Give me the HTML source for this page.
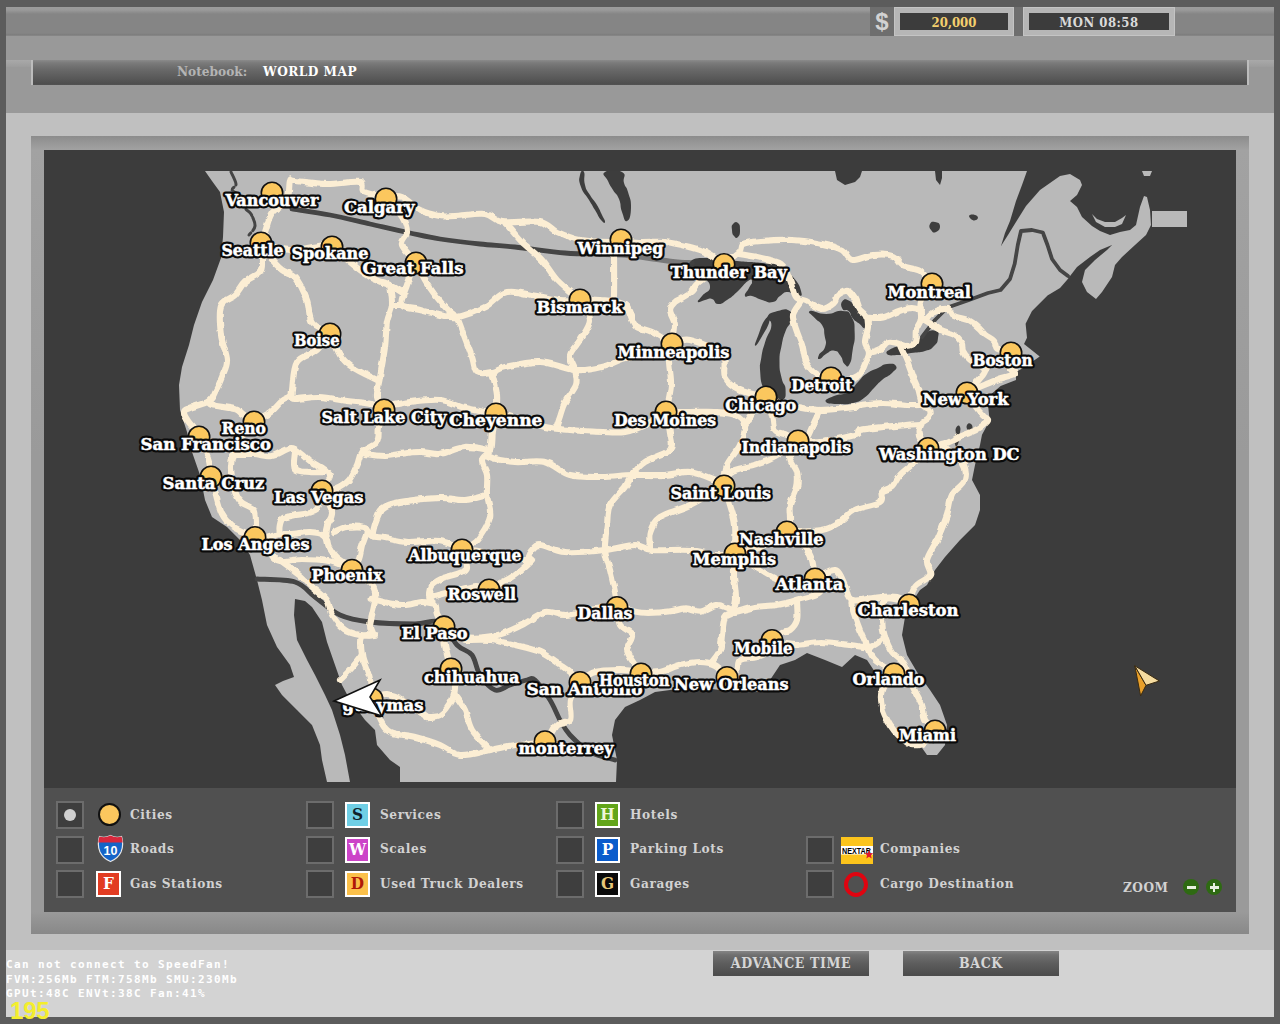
<!DOCTYPE html>
<html lang="en"><head><meta charset="utf-8"><title>World Map</title>
<style>
html,body{margin:0;padding:0}
body{width:1280px;height:1024px;background:#5c5c5c;position:relative;overflow:hidden;font-family:"DejaVu Serif Condensed","DejaVu Serif","Liberation Serif",serif;font-weight:bold}
div{position:absolute;box-sizing:border-box}
#topbar{left:6px;top:7px;width:1268px;height:29px;background:linear-gradient(#9c9c9c 0,#9a9a9a 3px,#858585 7px,#858585 26px,#7c7c7c 28px,#8e8e8e 29px)}
#band{left:6px;top:36px;width:1268px;height:77px;background:#999}
#panel{left:6px;top:113px;width:1268px;height:837px;background:#c0c0c0}
#foot{left:6px;top:950px;width:1268px;height:67px;background:#d3d3d3}
#title{left:31px;top:60px;width:1218px;height:25px;background:linear-gradient(#8a8a8a 0,#7a7a7a 3px,#6a6a6a 9px,#4e4e4e 24px,#555 25px);border-left:2px solid #bdbdbd;border-right:2px solid #bdbdbd}
#title span{position:absolute;top:3px;font-size:13.5px;white-space:nowrap}
#frame{left:31px;top:136px;width:1218px;height:798px;background:linear-gradient(#8c8c8c 0,#a2a2a2 14px,#9a9a9a 40%,#9a9a9a 776px,#888 798px)}
#mapbg{left:44px;top:150px;width:1192px;height:638px;background:#3c3c3c}
#legend{left:44px;top:788px;width:1192px;height:124px;background:#505050}
.cb{width:28px;height:28px;background:#3e3e3e;border:2px solid #6c6c6c}
.lb{font-size:13.5px;color:#d2d2d2;letter-spacing:.6px;white-space:nowrap;line-height:16px}
.ic{width:25px;height:26px;border:2.5px solid #fff;text-align:center;font-size:17px;line-height:21px}
.btn{height:25px;width:156px;top:951px;background:linear-gradient(#858585 0,#707070 4px,#5e5e5e 12px,#4c4c4c 24px);color:#d6d6d6;font-size:14px;letter-spacing:.6px;text-align:center;line-height:24px}
.box{top:7px;height:29px;background:#b6b6b6;border:1px solid #c4c4c4}
.box i{position:absolute;left:5px;right:5px;top:5px;bottom:5px;background:#3c3c3c;font-style:normal;text-align:center;font-size:13px;line-height:20px;font-weight:bold}
#osd{left:6px;top:958.3px;font:bold 11px/14.4px "DejaVu Sans Mono","Liberation Mono",monospace;color:#fff;white-space:pre;letter-spacing:1.38px}
#fps{left:10px;top:998px;font:bold 24px/26px "Liberation Sans",sans-serif;color:#f4ee2c;letter-spacing:-.2px}
</style></head><body>
<div id="topbar"></div><div id="band"></div><div id="panel"></div><div id="foot"></div>
<div style="left:870px;top:7px;width:24px;height:29px;background:#6e6e6e;color:#d2d2d2;font:bold 24px/29px 'Liberation Sans',sans-serif;text-align:center">$</div>
<div class="box" style="left:894px;width:120px"><i style="color:#f3cf6e">20,000</i></div>
<div style="left:1014px;top:7px;width:9px;height:29px;background:#6e6e6e"></div>
<div class="box" style="left:1023px;width:152px"><i style="color:#dadada;letter-spacing:.5px">MON 08:58</i></div>
<div style="left:6px;top:60px;width:25px;height:7px;background:linear-gradient(#a9a9a9,#9c9c9c)"></div><div style="left:1249px;top:60px;width:25px;height:7px;background:linear-gradient(#a9a9a9,#9c9c9c)"></div>
<div id="title"><span style="left:144px;color:#b4b4b4">Notebook:</span><span style="left:230px;color:#fff;letter-spacing:.5px">WORLD MAP</span></div>
<div id="frame"></div>
<div id="mapbg"></div>
<svg width="1192" height="638" viewBox="44 150 1192 638" style="position:absolute;left:44px;top:150px;overflow:hidden">
<defs><filter id="soft" x="-5%" y="-5%" width="110%" height="110%"><feGaussianBlur stdDeviation="0.7"/></filter><filter id="wob" x="-2%" y="-2%" width="104%" height="104%"><feTurbulence type="fractalNoise" baseFrequency="0.11" numOctaves="2" seed="4" result="n"/><feDisplacementMap in="SourceGraphic" in2="n" scale="4" xChannelSelector="R" yChannelSelector="G"/><feGaussianBlur stdDeviation="0.45"/></filter><clipPath id="mc"><rect x="100" y="171" width="1088" height="611"/></clipPath></defs>
<g clip-path="url(#mc)">
<g filter="url(#soft)"><polygon fill="#b9b9b9" points="205,171 212,181 220,192 224,212 223,237 221,258 213,280 202,302 194,325 189,345 182,367 179,385 180,410 187,432 192,452 200,475 205,500 212,517 227,527 240,540 250,555 257,580 262,600 267,625 277,647 290,665 294,677 283,681 275,685 282,695 297,710 312,725 320,745 322,760 327,782 350,782 345,755 340,735 332,710 325,695 315,675 307,660 297,640 294,615 295,599 305,601 312,607 322,622 327,642 335,665 342,685 350,700 365,720 375,730 377,745 390,760 400,767 400,782 616,782 617,760 612,735 615,720 625,707 640,700 655,692 670,690 695,687 720,690 740,690 760,692 770,680 780,665 795,660 807,653 825,660 842,667 855,655 867,660 875,672 882,690 880,707 890,725 900,740 920,745 927,755 937,755 945,745 947,725 940,705 930,690 917,672 907,655 902,635 905,617 912,602 920,590 927,585 935,570 945,557 960,540 975,525 980,510 980,495 972,480 975,465 980,445 982,434.7 989.7,420.6 988,405 989.7,395.6 1000.6,386 1016,380 1016,372 1024,367.5 1039.7,356.5 1024,344 1027,337.8 1025.6,323.75 1032,311 1047.5,295.6 1060,288 1067,280 1077,267 1090,257 1100,250 1112,245 1107,250 1095,260 1085,270 1082,282 1087,292 1096,299 1102,292 1112,277 1115,265 1122,257 1135,245 1146,235 1151,225 1150,210 1147,197 1144,196 1140,207 1136,225 1130,230 1120,232 1110,235 1100,231 1092,226 1082,217 1077,207 1070,201 1077,195 1082,185 1080,180 1070,174 1060,176 1040,190 1026,206 1016,222 1008,235 1001,246 1005,233 1010,221 1016,201 1022,185 1027,171 942,171 942,178 940,185 936,180 935,171 862,171 860,177 855,182 845,185 837,180 835,171"/>
<polygon fill="#b9b9b9" points="1092,214 1096,222 1105,227 1115,227 1122,224 1126,215 1122,218 1115,222 1105,222 1097,219"/><polygon fill="#b9b9b9" points="1152,211 1187,211 1187,227 1152,227"/><polygon fill="#b9b9b9" points="1142,171 1152,171 1150,176 1144,176"/>
<path fill="#3d3d3d" d="M690 262 C694.5 256.9 700.9 258.3 715 258 C729.1 257.7 722.9 259.5 737 261 C751.1 262.5 749.1 261.5 762 263 C774.9 264.5 770.7 261.8 780 266 C789.3 270.2 786.7 269.5 793 277 C799.3 284.5 799.5 285.3 801 291 C802.5 296.7 801.9 295.7 798 296 C794.1 296.3 793.4 292.0 788 292 C782.6 292.0 784.5 293.0 780 296 C775.5 299.0 778.4 300.8 773 302 C767.6 303.2 768.3 301.8 762 300 C755.7 298.2 757.1 297.2 752 296 C746.9 294.8 745.9 298.4 745 296 C744.1 293.6 746.9 292.2 749 288 C751.1 283.8 752.3 284.1 752 282 C751.7 279.9 752.5 278.0 748 281 C743.5 284.0 743.3 286.3 737 292 C730.7 297.7 732.7 296.4 727 300 C721.3 303.6 722.5 304.3 718 304 C713.5 303.7 715.9 300.2 712 299 C708.1 297.8 709.2 299.1 705 300 C700.8 300.9 698.9 303.2 698 302 C697.1 300.8 698.4 300.8 702 296 C705.6 291.2 710.6 292.3 710 286 C709.4 279.7 706.0 282.2 700 275 C694.0 267.8 685.5 267.1 690 262Z"/>
<path fill="#3d3d3d" d="M777.5 311 C784.2 309.1 785.7 308.0 789.7 311 C793.7 314.0 791.9 315.0 790.7 321 C789.5 327.0 788.3 323.6 785.6 331 C782.9 338.4 783.4 336.3 781.6 345.6 C779.8 354.9 779.5 352.3 779.5 362 C779.5 371.7 779.8 369.6 781.6 378 C783.4 386.4 785.6 383.2 785.6 390 C785.6 396.8 786.5 398.0 781.6 400.5 C776.7 403.0 774.9 402.1 769.4 398.4 C763.9 394.7 766.1 396.2 763.3 388.3 C760.5 380.4 760.8 381.1 760.2 372 C759.6 362.9 759.8 366.9 761.3 357.8 C762.8 348.7 762.3 351.4 765.3 341.6 C768.3 331.9 770.8 332.6 771.4 325.3 C772.0 318.0 765.5 321.5 767.3 317.2 C769.1 312.9 770.8 312.9 777.5 311Z"/>
<path fill="#3d3d3d" d="M765.3 319.2 C768.7 314.9 770.6 315.8 769.4 321.3 C768.2 326.8 765.6 330.2 761.3 337.5 C757.0 344.8 756.1 346.2 755.2 345.6 C754.3 345.0 755.2 343.4 758.2 335.5 C761.2 327.6 761.9 323.5 765.3 319.2Z"/>
<path fill="#3d3d3d" d="M810 311 C813.4 309.7 816.5 314.0 826.3 314 C836.0 314.0 834.9 310.1 842.5 311 C850.1 311.9 847.9 310.3 851.6 317 C855.3 323.7 854.4 323.6 854.7 333.4 C855.0 343.2 854.2 340.5 852.7 349.7 C851.2 358.9 852.1 359.7 849.6 364 C847.1 368.3 847.2 366.5 844.5 364 C841.8 361.5 843.5 359.8 840.5 355.8 C837.5 351.8 838.7 351.3 834.4 350.7 C830.1 350.1 830.6 351.4 826.3 353.8 C822.0 356.2 822.5 358.3 820.2 358.8 C817.9 359.3 817.2 359.1 818.7 355.4 C820.2 351.7 823.4 352.6 825.2 346.6 C827.0 340.6 825.5 341.9 824.6 335.5 C823.7 329.1 825.1 330.5 822.2 325.3 C819.3 320.1 818.7 322.5 815 318.2 C811.3 313.9 806.6 312.3 810 311Z"/>
<path fill="#3d3d3d" d="M842.5 301 C844.6 298.6 845.3 298.6 849.6 301 C853.9 303.4 852.4 305.1 856.7 309 C861.0 312.9 859.8 310.3 863.8 314 C867.8 317.7 869.4 317.0 870 321.3 C870.6 325.6 869.3 327.8 865.9 328.4 C862.5 329.0 862.8 326.4 858.8 323.3 C854.8 320.2 855.8 321.9 852.7 318.2 C849.6 314.5 851.7 313.8 848.6 311 C845.5 308.2 844.3 312.0 842.5 309 C840.7 306.0 840.4 303.4 842.5 301Z"/>
<path fill="#3d3d3d" d="M896 366 C897.5 368.7 896.2 368.8 892 373 C887.8 377.2 887.4 375.5 882 380 C876.6 384.5 879.4 382.6 874 388 C868.6 393.4 870.3 393.5 864 398 C857.7 402.5 860.2 401.2 853 403 C845.8 404.8 848.1 404.3 840 404 C831.9 403.7 827.8 404.4 826 402 C824.2 399.6 827.4 399.0 834 396 C840.6 393.0 840.8 396.2 848 392 C855.2 387.8 852.6 387.4 858 382 C863.4 376.6 860.0 378.2 866 374 C872.0 369.8 871.7 371.0 878 368 C884.3 365.0 881.6 364.6 887 364 C892.4 363.4 894.5 363.3 896 366Z"/>
<path fill="#3d3d3d" d="M887 354 C885.2 351.9 887.6 350.4 893 348 C898.4 345.6 897.8 348.1 905 346 C912.2 343.9 911.0 344.9 917 341 C923.0 337.1 919.3 336.0 925 333 C930.7 330.0 932.1 329.5 936 331 C939.9 332.5 938.6 333.5 938 338 C937.4 342.5 937.9 342.1 934 346 C930.1 349.9 931.9 348.9 925 351 C918.1 353.1 918.8 351.8 911 353 C903.2 354.2 906.2 354.7 899 355 C891.8 355.3 888.8 356.1 887 354Z"/>
<path fill="#3d3d3d" d="M605 172 C609.2 169.3 616.3 168.7 622 172 C627.7 175.3 622.2 177.0 624 183 C625.8 189.0 625.9 184.5 628 192 C630.1 199.5 631.3 199.3 631 208 C630.7 216.7 629.7 219.8 627 221 C624.3 222.2 624.4 218.6 622 212 C619.6 205.4 621.7 205.6 619 199 C616.3 192.4 616.3 195.4 613 190 C609.7 184.6 610.4 186.4 608 181 C605.6 175.6 600.8 174.7 605 172Z"/>
<path fill="#3d3d3d" d="M580 175 C580.9 170.5 582.5 169.0 584 172 C585.5 175.0 583.2 178.1 585 185 C586.8 191.9 586.4 189.0 590 195 C593.6 201.0 593.4 199.0 597 205 C600.6 211.0 599.6 209.9 602 215 C604.4 220.1 605.3 220.5 605 222 C604.7 223.5 604.0 223.6 601 220 C598.0 216.4 598.6 216.0 595 210 C591.4 204.0 593.2 206.9 589 200 C584.8 193.1 583.7 194.5 581 187 C578.3 179.5 579.1 179.5 580 175Z"/>
<path fill="#3d3d3d" d="M733 224 C734.8 221.9 735.9 221.2 738 223 C740.1 224.8 740.0 225.8 740 230 C740.0 234.2 739.8 235.2 738 237 C736.2 238.8 735.8 238.1 734 236 C732.2 233.9 732.3 233.6 732 230 C731.7 226.4 731.2 226.1 733 224Z"/>
<path fill="#3d3d3d" d="M930 224 C931.2 221.6 932.0 221.4 935 222 C938.0 222.6 939.7 223.0 940 226 C940.3 229.0 938.7 230.8 936 232 C933.3 233.2 932.8 232.4 931 230 C929.2 227.6 928.8 226.4 930 224Z"/>
<path fill="#3d3d3d" d="M956 428 C957.2 425.3 959.0 424.6 960 427 C961.0 429.4 960.2 430.6 959.5 436 C958.8 441.4 958.9 442.6 957.5 445 C956.1 447.4 955.5 446.7 955 444 C954.5 441.3 955.7 440.8 956 436 C956.3 431.2 954.8 430.7 956 428Z"/>
<path fill="#3d3d3d" d="M967 425 C967.9 423.2 969.5 422.8 971 424 C972.5 425.2 972.9 427.2 972 429 C971.1 430.8 969.5 431.2 968 430 C966.5 428.8 966.1 426.8 967 425Z"/>
<path fill="#3d3d3d" d="M970 215 C971.8 214.1 975.2 214.5 977 216 C978.8 217.5 977.8 219.1 976 220 C974.2 220.9 972.8 220.5 971 219 C969.2 217.5 968.2 215.9 970 215Z"/>
</g>
<g fill="none" stroke="#444" stroke-width="4.8" stroke-linecap="round" stroke-linejoin="round" filter="url(#soft)">
<path d="M292 209 C298.3 210.0 317.0 212.5 330 215 C343.0 217.5 356.7 221.0 370 224 C383.3 227.0 398.3 230.5 410 233 C421.7 235.5 428.3 237.2 440 239 C451.7 240.8 467.5 242.7 480 244 C492.5 245.3 500.8 245.5 515 247 C529.2 248.5 550.8 251.8 565 253 C579.2 254.2 594.2 253.8 600 254"/>
<path d="M257 579 C263.3 579.5 285.3 579.0 295 582 C304.7 585.0 307.5 591.5 315 597 C322.5 602.5 330.8 610.8 340 615 C349.2 619.2 357.5 620.5 370 622 C382.5 623.5 403.3 624.0 415 624 C426.7 624.0 433.0 618.5 440 622 C447.0 625.5 451.7 639.5 457 645 C462.3 650.5 468.2 650.0 472 655 C475.8 660.0 476.2 669.2 480 675 C483.8 680.8 490.0 688.3 495 690 C500.0 691.7 504.7 686.7 510 685 C515.3 683.3 522.8 680.8 527 680 C531.2 679.2 531.2 676.7 535 680 C538.8 683.3 545.8 693.3 550 700 C554.2 706.7 556.7 714.2 560 720 C563.3 725.8 565.0 729.7 570 735 C575.0 740.3 582.5 747.8 590 752 C597.5 756.2 610.8 758.7 615 760"/>
<path stroke-width="5.5" stroke-opacity=".55" d="M600 254 C604.2 254.2 615.8 254.2 625 255 C634.2 255.8 646.7 257.8 655 259 C663.3 260.2 668.8 261.3 675 262 C681.2 262.7 689.2 262.8 692 263"/>
<path stroke-width="3" stroke-dasharray="14 3 9 2" d="M231 172 C231.8 174.0 235.8 181.0 236 184 C236.2 187.0 231.3 188.0 232 190 C232.7 192.0 237.8 193.0 240 196 C242.2 199.0 243.2 205.0 245 208 C246.8 211.0 249.3 211.0 251 214 C252.7 217.0 255.3 222.5 255 226 C254.7 229.5 250.0 233.5 249 235"/>
<polyline stroke-width="3.8" points="922,337 935,320 947.5,307.5 969,300 988,293 1000.6,290 1010,279 1014.7,263.8 1017.8,245 1021,231 1032,230 1042.8,232.5 1047.5,245 1052,259 1060,270 1068,276"/>
</g>
<g fill="none" stroke="#fceed4" stroke-width="6.1" stroke-linecap="round" stroke-linejoin="round" filter="url(#wob)">
<path d="M261 242 C261.7 240.3 263.2 236.8 265 232 C266.8 227.2 268.3 218.3 272 213 C275.7 207.7 284.0 205.3 287 200 C290.0 194.7 288.7 184.2 290 181 C291.3 177.8 288.8 180.5 295 181 C301.2 181.5 316.2 183.8 327 184 C337.8 184.2 353.8 180.7 360 182 C366.2 183.3 359.7 189.5 364 192 C368.3 194.5 382.3 196.2 386 197"/>
<path d="M386 197 C388.7 197.0 396.3 194.8 402 197 C407.7 199.2 413.7 206.8 420 210 C426.3 213.2 434.2 215.0 440 216 C445.8 217.0 447.5 216.3 455 216 C462.5 215.7 477.2 213.0 485 214 C492.8 215.0 492.8 220.7 502 222 C511.2 223.3 530.8 220.3 540 222 C549.2 223.7 550.3 229.0 557 232 C563.7 235.0 571.2 238.3 580 240 C588.8 241.7 603.2 242.0 610 242 C616.8 242.0 619.2 240.3 621 240"/>
<path d="M386 197 C388.7 200.3 398.5 211.2 402 217 C405.5 222.8 407.0 227.3 407 232 C407.0 236.7 400.5 240.0 402 245 C403.5 250.0 413.7 259.2 416 262"/>
<path d="M261 242 C261.2 245.0 262.2 255.0 262 260 C261.8 265.0 262.8 268.3 260 272 C257.2 275.7 249.2 278.2 245 282 C240.8 285.8 239.0 291.0 235 295 C231.0 299.0 223.3 299.3 221 306 C218.7 312.7 220.0 326.0 221 335 C222.0 344.0 226.8 353.0 227 360 C227.2 367.0 223.8 372.0 222 377 C220.2 382.0 218.2 386.0 216 390 C213.8 394.0 213.3 398.0 209 401 C204.7 404.0 194.2 406.2 190 408 C185.8 409.8 184.3 409.8 184 412 C183.7 414.2 185.5 417.3 188 421 C190.5 424.7 197.2 431.8 199 434"/>
<path d="M209 401 C209.5 401.7 207.7 403.7 212 405 C216.3 406.3 230.0 407.5 235 409 C240.0 410.5 238.8 412.0 242 414 C245.2 416.0 252.0 419.8 254 421"/>
<path d="M261 242 C262.5 244.5 266.5 252.3 270 257 C273.5 261.7 277.8 266.7 282 270 C286.2 273.3 290.8 272.0 295 277 C299.2 282.0 304.2 292.5 307 300 C309.8 307.5 308.2 316.7 312 322 C315.8 327.3 327.0 330.3 330 332"/>
<path d="M261 242 C265.8 243.3 278.2 249.5 290 250 C301.8 250.5 322.8 243.7 332 245 C341.2 246.3 338.7 252.7 345 258 C351.3 263.3 362.5 272.5 370 277 C377.5 281.5 384.7 282.5 390 285 C395.3 287.5 400.0 290.8 402 292"/>
<path d="M416 262 C414.5 265.8 409.3 277.8 407 285 C404.7 292.2 399.8 300.8 402 305 C404.2 309.2 413.7 308.3 420 310 C426.3 311.7 433.8 313.8 440 315 C446.2 316.2 449.5 318.3 457 317 C464.5 315.7 476.7 311.2 485 307 C493.3 302.8 498.3 293.8 507 292 C515.7 290.2 528.2 294.7 537 296 C545.8 297.3 552.8 299.3 560 300 C567.2 300.7 576.7 300.0 580 300"/>
<path d="M416 262 C417.5 265.0 421.8 274.5 425 280 C428.2 285.5 431.2 290.0 435 295 C438.8 300.0 444.3 306.3 448 310 C451.7 313.7 455.5 315.8 457 317"/>
<path d="M390 285 C390.3 288.3 392.5 298.8 392 305 C391.5 311.2 388.2 315.0 387 322 C385.8 329.0 386.2 337.8 385 347 C383.8 356.2 381.3 368.7 380 377 C378.7 385.3 376.3 392.0 377 397 C377.7 402.0 382.8 405.3 384 407"/>
<path d="M392 305 L402 305"/>
<path d="M330 332 C331.7 335.8 336.3 349.2 340 355 C343.7 360.8 345.8 362.8 352 367 C358.2 371.2 372.8 377.8 377 380"/>
<path d="M330 332 C327.8 335.0 322.5 345.0 317 350 C311.5 355.0 301.2 355.3 297 362 C292.8 368.7 293.0 384.3 292 390 C291.0 395.7 292.7 394.2 291 396 C289.3 397.8 285.3 398.3 282 401 C278.7 403.7 275.7 408.7 271 412 C266.3 415.3 256.8 419.5 254 421"/>
<path d="M291 396 C291.7 396.5 290.3 398.8 295 399 C299.7 399.2 310.3 396.7 319 397 C327.7 397.3 339.2 400.0 347 401 C354.8 402.0 359.8 402.0 366 403 C372.2 404.0 381.0 406.3 384 407"/>
<path d="M384 407 C388.3 406.2 400.7 403.2 410 402 C419.3 400.8 430.8 399.0 440 400 C449.2 401.0 455.7 405.7 465 408 C474.3 410.3 490.8 413.0 496 414"/>
<path d="M362 452 C362.7 452.3 362.2 453.3 366 454 C369.8 454.7 379.3 456.0 385 456 C390.7 456.0 394.2 454.7 400 454 C405.8 453.3 413.3 452.0 420 452 C426.7 452.0 432.5 454.8 440 454 C447.5 453.2 456.7 447.7 465 447 C473.3 446.3 485.8 449.5 490 450"/>
<path d="M496 414 C496.2 410.8 497.7 402.0 497 395 C496.3 388.0 492.8 375.8 492 372"/>
<path d="M457 317 C457.8 319.2 459.5 323.3 462 330 C464.5 336.7 469.5 350.0 472 357 C474.5 364.0 473.7 369.5 477 372 C480.3 374.5 487.3 372.8 492 372 C496.7 371.2 497.0 368.7 505 367 C513.0 365.3 528.3 361.5 540 362 C551.7 362.5 564.7 369.2 575 370 C585.3 370.8 592.8 369.2 602 367 C611.2 364.8 619.5 358.7 630 357 C640.5 355.3 658.5 356.8 665 357 C671.5 357.2 668.3 357.8 669 358"/>
<path d="M580 300 C581.7 303.3 590.0 313.3 590 320 C590.0 326.7 583.3 334.2 580 340 C576.7 345.8 570.8 350.0 570 355 C569.2 360.0 574.0 365.0 575 370 C576.0 375.0 577.7 379.7 576 385 C574.3 390.3 567.7 396.8 565 402 C562.3 407.2 561.3 412.2 560 416 C558.7 419.8 557.5 423.5 557 425"/>
<path d="M496 414 C497.5 414.2 496.8 412.8 505 415 C513.2 417.2 534.2 424.5 545 427 C555.8 429.5 560.5 429.2 570 430 C579.5 430.8 592.8 431.7 602 432 C611.2 432.3 617.8 433.2 625 432 C632.2 430.8 638.2 428.3 645 425 C651.8 421.7 662.5 414.2 666 412"/>
<path d="M614 248 C614.0 255.8 614.3 286.0 614 295 C613.7 304.0 612.3 300.8 612 302"/>
<path d="M580 300 C583.3 300.0 592.5 299.2 600 300 C607.5 300.8 619.2 300.8 625 305 C630.8 309.2 630.5 320.5 635 325 C639.5 329.5 645.8 328.8 652 332 C658.2 335.2 668.7 342.0 672 344"/>
<path d="M502 222 C502.8 222.5 503.7 221.7 507 225 C510.3 228.3 516.2 236.2 522 242 C527.8 247.8 536.2 253.7 542 260 C547.8 266.3 550.7 273.3 557 280 C563.3 286.7 576.2 296.7 580 300"/>
<path d="M621 240 C624.2 240.3 632.7 241.7 640 242 C647.3 242.3 656.7 241.2 665 242 C673.3 242.8 683.3 245.3 690 247 C696.7 248.7 699.3 249.2 705 252 C710.7 254.8 720.8 262.0 724 264"/>
<path d="M724 264 C726.5 262.0 735.8 255.3 739 252 C742.2 248.7 739.3 245.8 743 244 C746.7 242.2 752.8 241.7 761 241 C769.2 240.3 781.8 239.5 792 240 C802.2 240.5 813.7 242.3 822 244 C830.3 245.7 837.0 247.3 842 250 C847.0 252.7 846.8 259.2 852 260 C857.2 260.8 866.2 255.7 873 255 C879.8 254.3 888.0 254.2 893 256 C898.0 257.8 898.5 263.5 903 266 C907.5 268.5 915.2 268.0 920 271 C924.8 274.0 930.0 281.8 932 284"/>
<path d="M739 254 C742.7 254.7 754.0 256.3 761 258 C768.0 259.7 776.2 260.3 781 264 C785.8 267.7 787.5 274.5 790 280 C792.5 285.5 793.3 293.5 796 297 C798.7 300.5 801.7 299.0 806 301 C810.3 303.0 817.3 308.7 822 309 C826.7 309.3 831.3 305.3 834 303 C836.7 300.7 835.7 297.0 838 295 C840.3 293.0 845.2 290.3 848 291 C850.8 291.7 853.2 296.0 855 299 C856.8 302.0 857.2 306.2 859 309 C860.8 311.8 864.5 313.0 866 316 C867.5 319.0 868.2 322.7 868 327 C867.8 331.3 864.8 337.7 865 342 C865.2 346.3 869.0 349.3 869 353 C869.0 356.7 866.5 360.5 865 364 C863.5 367.5 862.0 371.7 860 374 C858.0 376.3 856.0 376.7 853 378 C850.0 379.3 845.7 382.3 842 382 C838.3 381.7 832.8 377.0 831 376"/>
<path d="M800 303 C798.8 305.0 793.7 310.7 793 315 C792.3 319.3 794.5 324.0 796 329 C797.5 334.0 800.3 339.5 802 345 C803.7 350.5 804.0 357.5 806 362 C808.0 366.5 810.7 369.3 814 372 C817.3 374.7 823.2 377.3 826 378 C828.8 378.7 830.2 376.3 831 376"/>
<path d="M724 264 C719.7 267.2 703.3 278.5 698 283 C692.7 287.5 695.0 288.3 692 291 C689.0 293.7 682.8 297.2 680 299 C677.2 300.8 676.7 300.2 675 302 C673.3 303.8 670.0 306.2 670 310 C670.0 313.8 674.7 319.3 675 325 C675.3 330.7 672.5 340.8 672 344"/>
<path d="M672 344 C675.0 343.3 681.7 338.2 690 340 C698.3 341.8 716.2 348.8 722 355 C727.8 361.2 722.0 371.2 725 377 C728.0 382.8 733.2 386.7 740 390 C746.8 393.3 761.7 395.8 766 397"/>
<path d="M672 344 C671.5 346.7 669.2 353.2 669 360 C668.8 366.8 671.5 376.3 671 385 C670.5 393.7 666.8 407.5 666 412"/>
<path d="M666 412 C670.0 412.0 681.8 412.0 690 412 C698.2 412.0 707.5 411.5 715 412 C722.5 412.5 730.0 412.8 735 415 C740.0 417.2 744.2 420.0 745 425 C745.8 430.0 743.0 438.3 740 445 C737.0 451.7 729.7 458.2 727 465 C724.3 471.8 724.5 482.5 724 486"/>
<path d="M766 397 C764.2 399.2 758.5 405.3 755 410 C751.5 414.7 746.7 422.5 745 425"/>
<path d="M666 412 C666.7 415.3 669.3 425.7 670 432 C670.7 438.3 674.2 445.0 670 450 C665.8 455.0 651.3 457.8 645 462 C638.7 466.2 635.3 470.8 632 475 C628.7 479.2 628.7 482.0 625 487 C621.3 492.0 613.0 498.7 610 505 C607.0 511.3 607.8 517.5 607 525 C606.2 532.5 604.5 542.5 605 550 C605.5 557.5 608.3 563.0 610 570 C611.7 577.0 613.8 586.0 615 592 C616.2 598.0 616.7 603.7 617 606"/>
<path d="M490 450 C490.0 451.2 485.8 455.0 490 457 C494.2 459.0 505.8 461.2 515 462 C524.2 462.8 535.8 459.8 545 462 C554.2 464.2 560.5 472.5 570 475 C579.5 477.5 591.7 477.0 602 477 C612.3 477.0 621.5 475.3 632 475 C642.5 474.7 655.3 475.5 665 475 C674.7 474.5 681.7 471.2 690 472 C698.3 472.8 709.3 477.7 715 480 C720.7 482.3 722.5 485.0 724 486"/>
<path d="M496 414 C495.3 417.0 493.0 426.0 492 432 C491.0 438.0 491.7 445.3 490 450 C488.3 454.7 482.5 455.8 482 460 C481.5 464.2 486.2 469.2 487 475 C487.8 480.8 486.5 488.0 487 495 C487.5 502.0 491.7 509.5 490 517 C488.3 524.5 481.7 534.7 477 540 C472.3 545.3 464.5 547.5 462 549"/>
<path d="M372 536 C372.7 533.5 374.2 525.7 376 521 C377.8 516.3 379.0 511.2 383 508 C387.0 504.8 390.5 503.7 400 502 C409.5 500.3 429.2 498.3 440 498 C450.8 497.7 457.2 500.5 465 500 C472.8 499.5 483.3 495.8 487 495"/>
<path d="M462 549 C463.7 549.2 465.7 549.0 472 550 C478.3 551.0 491.2 553.3 500 555 C508.8 556.7 519.7 560.8 525 560 C530.3 559.2 529.5 552.5 532 550 C534.5 547.5 534.5 544.7 540 545 C545.5 545.3 554.2 551.2 565 552 C575.8 552.8 593.3 551.2 605 550 C616.7 548.8 627.2 545.0 635 545 C642.8 545.0 642.8 549.2 652 550 C661.2 550.8 679.5 549.2 690 550 C700.5 550.8 707.5 554.3 715 555 C722.5 555.7 731.7 554.2 735 554"/>
<path d="M462 549 C458.3 547.7 449.2 542.2 440 541 C430.8 539.8 416.2 542.5 407 542 C397.8 541.5 390.8 539.0 385 538 C379.2 537.0 375.2 537.5 372 536 C368.8 534.5 367.0 530.2 366 529"/>
<path d="M384 407 C383.2 410.3 380.2 421.2 379 427 C377.8 432.8 379.8 437.8 377 442 C374.2 446.2 365.3 448.2 362 452 C358.7 455.8 359.2 460.3 357 465 C354.8 469.7 352.5 476.0 349 480 C345.5 484.0 340.5 487.3 336 489 C331.5 490.7 324.3 489.8 322 490"/>
<path d="M322 490 C323.7 493.7 331.2 506.2 332 512 C332.8 517.8 328.2 521.0 327 525 C325.8 529.0 325.3 534.2 325 536"/>
<path d="M334 532 C336.2 531.2 341.7 527.5 347 527 C352.3 526.5 363.5 525.8 366 529 C368.5 532.2 363.2 541.0 362 546 C360.8 551.0 360.5 555.3 359 559 C357.5 562.7 354.0 566.5 353 568"/>
<path d="M322 490 C321.0 493.3 321.2 505.7 316 510 C310.8 514.3 296.7 514.5 291 516 C285.3 517.5 283.8 516.3 282 519 C280.2 521.7 278.5 529.5 280 532 C281.5 534.5 286.0 534.0 291 534 C296.0 534.0 304.3 531.7 310 532 C315.7 532.3 321.8 533.5 325 536 C328.2 538.5 326.8 543.2 329 547 C331.2 550.8 334.0 555.5 338 559 C342.0 562.5 350.5 566.5 353 568"/>
<path d="M233 454 C236.5 454.0 247.5 453.7 254 454 C260.5 454.3 265.8 457.0 272 456 C278.2 455.0 286.0 448.3 291 448 C296.0 447.7 298.8 451.8 302 454 C305.2 456.2 306.5 458.5 310 461 C313.5 463.5 319.5 466.5 323 469 C326.5 471.5 331.2 472.7 331 476 C330.8 479.3 323.5 486.8 322 489"/>
<path d="M295 452 C295.0 454.8 292.5 465.7 295 469 C297.5 472.3 305.0 471.5 310 472 C315.0 472.5 322.5 472.0 325 472"/>
<path d="M254 421 C251.7 424.2 243.5 434.5 240 440 C236.5 445.5 234.5 449.2 233 454 C231.5 458.8 230.7 462.8 231 469 C231.3 475.2 233.3 485.5 235 491 C236.7 496.5 237.8 498.8 241 502 C244.2 505.2 251.5 506.2 254 510 C256.5 513.8 255.8 520.7 256 525 C256.2 529.3 255.2 534.2 255 536"/>
<path d="M199 436 C200.0 438.3 203.3 445.8 205 450 C206.7 454.2 208.0 457.0 209 461 C210.0 465.0 209.8 468.3 211 474 C212.2 479.7 214.2 488.3 216 495 C217.8 501.7 219.5 509.0 222 514 C224.5 519.0 227.3 522.0 231 525 C234.7 528.0 240.0 530.2 244 532 C248.0 533.8 253.2 535.3 255 536"/>
<path d="M255 536 C256.7 536.3 262.2 534.8 265 538 C267.8 541.2 269.5 551.2 272 555 C274.5 558.8 275.0 560.3 280 561 C285.0 561.7 293.8 559.0 302 559 C310.2 559.0 322.0 559.8 329 561 C336.0 562.2 340.0 564.8 344 566 C348.0 567.2 351.5 567.7 353 568"/>
<path d="M265 538 L280 534"/>
<path d="M352 569 C355.3 571.7 368.2 579.8 372 585 C375.8 590.2 375.3 593.3 375 600 C374.7 606.7 370.5 619.2 370 625 C369.5 630.8 373.3 633.0 372 635 C370.7 637.0 363.7 633.7 362 637 C360.3 640.3 361.2 649.5 362 655 C362.8 660.5 365.7 665.8 367 670 C368.3 674.2 369.2 675.2 370 680 C370.8 684.8 371.7 695.8 372 699"/>
<path d="M280 560 C283.3 562.5 295.0 570.8 300 575 C305.0 579.2 305.5 580.8 310 585 C314.5 589.2 323.3 595.0 327 600 C330.7 605.0 329.0 610.0 332 615 C335.0 620.0 340.3 626.7 345 630 C349.7 633.3 355.0 634.2 360 635 C365.0 635.8 372.5 635.0 375 635"/>
<path d="M462 549 C462.8 552.1 467.8 563.4 467 567.5 C466.2 571.6 461.7 571.9 457.5 573.75 C453.3 575.6 446.4 576.3 442 578.4 C437.6 580.5 433.1 582.9 431 586.25 C428.9 589.6 428.6 595.6 429.4 598.75 C430.2 601.9 434.3 602.4 435.6 605 C436.9 607.6 435.6 610.9 437 614.4 C438.4 617.9 442.8 624.1 444 626"/>
<path d="M371.6 598.75 C374.7 599.5 384.6 602.4 390.3 603.4 C396.0 604.4 400.8 605.2 406 605 C411.2 604.8 417.2 602.3 421.6 602 C426.0 601.7 430.7 603.2 432.5 603.4"/>
<path d="M489 589 C486.8 588.5 480.7 585.9 476 586 C471.3 586.1 466.3 588.1 460.6 589.4 C454.9 590.7 446.9 592.7 442 594 C437.1 595.3 432.8 596.5 431 597"/>
<path d="M444 626 C447.5 627.8 456.2 635.5 465 637 C473.8 638.5 487.5 637.0 497 635 C506.5 633.0 514.0 628.8 522 625 C530.0 621.2 537.8 613.7 545 612 C552.2 610.3 557.5 615.3 565 615 C572.5 614.7 581.3 611.5 590 610 C598.7 608.5 612.5 606.7 617 606"/>
<path d="M465 640 C469.2 640.0 481.7 639.2 490 640 C498.3 640.8 506.7 643.0 515 645 C523.3 647.0 532.5 648.7 540 652 C547.5 655.3 555.0 661.7 560 665 C565.0 668.3 566.7 669.3 570 672 C573.3 674.7 578.3 679.5 580 681"/>
<path d="M489 589 C490.3 588.3 492.7 587.3 497 585 C501.3 582.7 509.2 579.2 515 575 C520.8 570.8 529.2 562.5 532 560"/>
<path d="M444 626 C444.2 629.2 443.8 637.8 445 645 C446.2 652.2 449.3 662.3 451 669 C452.7 675.7 454.8 679.8 455 685 C455.2 690.2 454.5 695.0 452 700 C449.5 705.0 444.2 712.2 440 715 C435.8 717.8 429.2 716.7 427 717"/>
<path d="M455 695 C456.7 697.5 462.2 704.2 465 710 C467.8 715.8 467.8 723.3 472 730 C476.2 736.7 487.0 746.7 490 750"/>
<path d="M372 699 C374.5 698.3 381.5 694.5 387 695 C392.5 695.5 398.7 698.7 405 702 C411.3 705.3 421.3 712.5 425 715 C428.7 717.5 426.7 716.7 427 717"/>
<path d="M372 699 C373.3 702.5 377.0 714.5 380 720 C383.0 725.5 384.2 729.2 390 732 C395.8 734.8 406.7 734.8 415 737 C423.3 739.2 432.5 742.0 440 745 C447.5 748.0 451.7 754.2 460 755 C468.3 755.8 480.8 751.7 490 750 C499.2 748.3 505.8 746.5 515 745 C524.2 743.5 540.0 741.7 545 741"/>
<path d="M340 680 C341.7 678.3 346.3 674.2 350 670 C353.7 665.8 360.0 657.5 362 655"/>
<path d="M545 741 C546.2 739.5 550.0 734.7 552 732 C554.0 729.3 554.0 727.0 557 725 C560.0 723.0 567.8 724.2 570 720 C572.2 715.8 568.3 706.5 570 700 C571.7 693.5 578.3 684.2 580 681"/>
<path d="M580 681 C582.5 679.5 588.3 673.8 595 672 C601.7 670.2 612.3 670.0 620 670 C627.7 670.0 634.3 671.7 641 672 C647.7 672.3 653.5 673.2 660 672 C666.5 670.8 673.3 666.7 680 665 C686.7 663.3 694.2 662.0 700 662 C705.8 662.0 710.5 662.7 715 665 C719.5 667.3 725.0 674.2 727 676"/>
<path d="M617 606 C617.5 609.2 617.5 620.2 620 625 C622.5 629.8 630.8 630.8 632 635 C633.2 639.2 626.5 645.0 627 650 C627.5 655.0 632.7 661.3 635 665 C637.3 668.7 640.0 670.8 641 672"/>
<path d="M617 606 C620.0 606.9 629.9 610.4 635 611.6 C640.1 612.8 641.8 613.0 647.5 613 C653.2 613.0 662.8 612.4 669 611.6 C675.2 610.8 679.7 608.4 685 608.4 C690.3 608.4 695.4 612.2 700.6 611.6 C705.8 611.0 711.3 605.5 716 605 C720.7 604.5 725.6 607.2 728.75 608.4 C731.9 609.6 730.6 612.2 735 612 C739.4 611.8 748.0 608.2 755 607 C762.0 605.8 770.0 606.2 777 605 C784.0 603.8 789.8 602.2 797 600 C804.2 597.8 817.0 595.5 820 592 C823.0 588.5 815.8 581.2 815 579"/>
<path d="M735 554 C734.8 557.5 733.8 567.3 734 575 C734.2 582.7 736.3 593.8 736 600 C735.7 606.2 733.8 609.2 732 612 C730.2 614.8 726.7 613.2 725 617 C723.3 620.8 722.8 629.5 722 635 C721.2 640.5 721.7 645.5 720 650 C718.3 654.5 713.3 660.0 712 662"/>
<path d="M797 602 C797.0 605.0 798.2 615.3 797 620 C795.8 624.7 792.5 628.0 790 630 C787.5 632.0 785.0 630.3 782 632 C779.0 633.7 773.7 638.7 772 640"/>
<path d="M727 676 C728.7 675.0 734.8 672.7 737 670 C739.2 667.3 736.7 662.2 740 660 C743.3 657.8 751.7 658.7 757 657 C762.3 655.3 769.5 652.8 772 650 C774.5 647.2 772.0 641.7 772 640"/>
<path d="M772 640 C775.8 640.8 787.0 644.7 795 645 C803.0 645.3 810.8 642.0 820 642 C829.2 642.0 841.7 644.2 850 645 C858.3 645.8 864.2 648.3 870 647 C875.8 645.7 882.5 638.7 885 637"/>
<path d="M735 554 C737.5 553.3 743.3 552.3 750 550 C756.7 547.7 768.8 543.0 775 540 C781.2 537.0 785.0 533.3 787 532"/>
<path d="M735 554 C738.3 556.2 748.8 563.2 755 567 C761.2 570.8 765.8 574.0 772 577 C778.2 580.0 784.8 584.7 792 585 C799.2 585.3 811.2 580.0 815 579"/>
<path d="M724 486 C725.0 489.2 728.2 498.5 730 505 C731.8 511.5 734.2 516.8 735 525 C735.8 533.2 735.0 549.2 735 554"/>
<path d="M724 486 C718.3 489.2 700.7 499.8 690 505 C679.3 510.2 666.7 512.5 660 517 C653.3 521.5 651.7 527.0 650 532 C648.3 537.0 650.0 544.5 650 547"/>
<path d="M724 486 C725.0 483.7 724.8 475.5 730 472 C735.2 468.5 747.5 467.5 755 465 C762.5 462.5 767.8 461.0 775 457 C782.2 453.0 794.2 443.7 798 441"/>
<path d="M766 397 C767.0 400.0 770.5 409.5 772 415 C773.5 420.5 772.5 426.7 775 430 C777.5 433.3 783.2 433.2 787 435 C790.8 436.8 796.2 440.0 798 441"/>
<path d="M766 397 C768.3 398.0 774.8 401.3 780 403 C785.2 404.7 790.3 405.8 797 407 C803.7 408.2 810.3 410.0 820 410 C829.7 410.0 849.2 407.5 855 407"/>
<path d="M820 410 C818.7 412.8 814.2 422.5 812 427 C809.8 431.5 809.3 434.7 807 437 C804.7 439.3 799.5 440.3 798 441"/>
<path d="M798 441 C801.7 441.2 810.5 443.0 820 442 C829.5 441.0 848.3 437.0 855 435 C861.7 433.0 855.3 431.3 860 430 C864.7 428.7 875.2 427.8 883 427 C890.8 426.2 900.7 425.5 907 425 C913.3 424.5 918.7 424.2 921 424"/>
<path d="M798 441 C796.7 443.7 790.2 451.8 790 457 C789.8 462.2 795.8 467.0 797 472 C798.2 477.0 798.2 481.5 797 487 C795.8 492.5 791.2 499.5 790 505 C788.8 510.5 790.5 515.5 790 520 C789.5 524.5 787.5 530.0 787 532"/>
<path d="M928 448 C925.8 450.3 919.7 457.5 915 462 C910.3 466.5 903.8 470.8 900 475 C896.2 479.2 895.0 484.2 892 487 C889.0 489.8 884.0 489.5 882 492 C880.0 494.5 884.5 499.0 880 502 C875.5 505.0 861.7 506.7 855 510 C848.3 513.3 845.5 518.7 840 522 C834.5 525.3 830.8 528.3 822 530 C813.2 531.7 792.8 531.7 787 532"/>
<path d="M787 532 C790.0 534.5 800.8 542.3 805 547 C809.2 551.7 810.3 554.7 812 560 C813.7 565.3 814.5 575.8 815 579"/>
<path d="M815 579 C818.3 577.5 830.0 569.0 835 570 C840.0 571.0 842.2 580.0 845 585 C847.8 590.0 846.2 598.0 852 600 C857.8 602.0 872.5 597.5 880 597 C887.5 596.5 892.2 595.8 897 597 C901.8 598.2 907.0 602.8 909 604"/>
<path d="M852 600 C852.0 601.2 850.7 602.0 852 607 C853.3 612.0 857.5 623.7 860 630 C862.5 636.3 864.5 640.0 867 645 C869.5 650.0 870.5 655.5 875 660 C879.5 664.5 890.8 670.0 894 672"/>
<path d="M909 604 C905.0 603.3 889.5 597.3 885 600 C880.5 602.7 882.0 613.8 882 620 C882.0 626.2 883.3 631.7 885 637 C886.7 642.3 888.7 647.3 892 652 C895.3 656.7 901.7 659.5 905 665 C908.3 670.5 909.2 678.3 912 685 C914.8 691.7 919.8 699.2 922 705 C924.2 710.8 922.8 716.0 925 720 C927.2 724.0 933.3 727.5 935 729"/>
<path d="M894 672 C892.0 675.0 884.0 684.2 882 690 C880.0 695.8 880.7 701.2 882 707 C883.3 712.8 887.0 720.0 890 725 C893.0 730.0 896.3 733.7 900 737 C903.7 740.3 907.8 744.2 912 745 C916.2 745.8 921.2 744.7 925 742 C928.8 739.3 933.3 731.2 935 729"/>
<path d="M928 448 C930.3 447.5 936.4 447.0 942 445 C947.6 443.0 956.9 438.0 961.5 436 C966.1 434.0 966.5 434.3 969.4 433 C972.3 431.7 975.6 430.5 978.75 428.4 C981.9 426.3 987.2 422.7 988 420.6 C988.8 418.5 985.5 418.3 983.4 416 C981.3 413.7 978.3 410.6 975.6 406.6 C972.9 402.6 968.4 394.4 967 392"/>
<path d="M942 445 C945.3 447.8 958.2 456.2 962 462 C965.8 467.8 966.7 474.5 965 480 C963.3 485.5 955.0 489.2 952 495 C949.0 500.8 949.5 507.5 947 515 C944.5 522.5 940.3 532.5 937 540 C933.7 547.5 928.2 554.2 927 560 C925.8 565.8 932.0 570.5 930 575 C928.0 579.5 918.5 582.2 915 587 C911.5 591.8 910.0 601.2 909 604"/>
<path d="M967 392 C970.0 390.8 979.4 387.0 985 384.7 C990.6 382.4 995.6 380.2 1000.6 378.4 C1005.6 376.6 1013.1 375.6 1014.7 373.75 C1016.3 371.9 1010.6 371.3 1010 367.5 C1009.4 363.7 1010.8 353.8 1011 351"/>
<path d="M932 284 C930.2 287.0 922.8 296.2 921 302 C919.2 307.8 921.8 314.3 921 319 C920.2 323.7 917.0 326.2 916 330 C915.0 333.8 916.5 339.3 915 342 C913.5 344.7 910.0 345.8 907 346 C904.0 346.2 900.2 343.7 897 343 C893.8 342.3 890.8 341.0 888 342 C885.2 343.0 883.2 347.2 880 349 C876.8 350.8 870.8 352.3 869 353"/>
<path d="M921 319 C921.8 319.0 923.8 320.0 925.6 319 C927.4 318.0 928.4 314.7 932 313 C935.6 311.3 943.8 308.5 947.5 309 C951.2 309.5 950.4 314.1 954 316 C957.6 317.9 964.8 318.6 969 320.6 C973.2 322.6 976.3 325.6 979 328 C981.7 330.4 982.5 332.5 985 334.7 C987.5 336.9 991.9 338.6 994 341 C996.1 343.4 994.7 347.3 997.5 349 C1000.3 350.7 1008.8 350.7 1011 351"/>
<path d="M921 319 C921.8 319.3 922.3 318.8 925.6 320.6 C928.9 322.4 936.3 327.6 941 330 C945.7 332.4 950.6 332.6 954 334.7 C957.4 336.8 960.0 339.6 961.5 342.5 C963.0 345.4 961.8 349.1 963 352 C964.2 354.9 966.7 357.7 969 359.7 C971.3 361.7 974.3 362.2 977 364 C979.7 365.8 984.7 367.9 985 370.6 C985.3 373.3 981.8 376.4 978.75 380 C975.8 383.6 969.0 390.0 967 392"/>
<path d="M985 370.6 C987.0 368.8 992.7 363.3 997 360 C1001.3 356.7 1008.7 352.5 1011 351"/>
<path d="M866 316 C866.3 316.2 865.2 317.2 868 317.5 C870.8 317.8 877.8 318.6 883 317.5 C888.2 316.4 894.2 312.6 899 311 C903.8 309.4 907.8 308.2 911.5 308 C915.2 307.8 919.4 309.7 921 310"/>
<path d="M900.6 347 C901.7 349.3 904.9 356.0 907 361 C909.1 366.0 911.2 372.3 913 377 C914.8 381.7 916.4 384.3 918 389 C919.6 393.7 920.5 401.5 922.5 405 C924.5 408.5 928.9 407.9 930 410 C931.1 412.1 930.5 415.2 929 417.5 C927.5 419.8 922.7 420.9 921 424 C919.3 427.1 917.8 432.0 919 436 C920.2 440.0 926.5 446.0 928 448"/>
<path d="M855 407 C855.8 406.7 855.3 405.7 860 405 C864.7 404.3 875.2 403.0 883 403 C890.8 403.0 900.4 404.7 907 405 C913.6 405.3 919.9 405.0 922.5 405"/>
</g></g>
<g fill="#fbc75e" stroke="#111" stroke-width="1.6">
<circle cx="272" cy="193" r="10.7"/>
<circle cx="386" cy="199" r="10.7"/>
<circle cx="261" cy="243" r="10.7"/>
<circle cx="332" cy="247" r="10.7"/>
<circle cx="416" cy="263" r="10.7"/>
<circle cx="330" cy="334" r="10.7"/>
<circle cx="384" cy="410" r="10.7"/>
<circle cx="496" cy="414" r="10.7"/>
<circle cx="254" cy="422" r="10.7"/>
<circle cx="199" cy="437" r="10.7"/>
<circle cx="211" cy="477" r="10.7"/>
<circle cx="322" cy="491" r="10.7"/>
<circle cx="255" cy="537.5" r="10.7"/>
<circle cx="352" cy="570.2" r="10.7"/>
<circle cx="462" cy="550" r="10.7"/>
<circle cx="489" cy="590" r="10.7"/>
<circle cx="444" cy="626.8" r="10.7"/>
<circle cx="451" cy="669" r="10.7"/>
<circle cx="372" cy="699" r="10.7"/>
<circle cx="545" cy="741.7" r="10.7"/>
<circle cx="580" cy="682.5" r="10.7"/>
<circle cx="641" cy="674" r="10.7"/>
<circle cx="727" cy="677.5" r="10.7"/>
<circle cx="772" cy="640.5" r="10.7"/>
<circle cx="617" cy="607.5" r="10.7"/>
<circle cx="735" cy="554" r="10.7"/>
<circle cx="787" cy="532" r="10.7"/>
<circle cx="815" cy="579" r="10.7"/>
<circle cx="909" cy="605" r="10.7"/>
<circle cx="894" cy="674" r="10.7"/>
<circle cx="935" cy="731" r="10.7"/>
<circle cx="724" cy="486" r="10.7"/>
<circle cx="798" cy="441" r="10.7"/>
<circle cx="928" cy="448.5" r="10.7"/>
<circle cx="967" cy="393" r="10.7"/>
<circle cx="1011" cy="353" r="10.7"/>
<circle cx="766" cy="397" r="10.7"/>
<circle cx="831" cy="378" r="10.7"/>
<circle cx="932" cy="284" r="10.7"/>
<circle cx="724" cy="264.5" r="10.7"/>
<circle cx="621" cy="240" r="10.7"/>
<circle cx="580" cy="300" r="10.7"/>
<circle cx="672" cy="344" r="10.7"/>
<circle cx="666" cy="412" r="10.7"/>
</g>
<g font-family="'DejaVu Serif Condensed','DejaVu Serif','Liberation Serif',serif" font-weight="bold" font-size="16.6" stroke-linejoin="round">
<text x="225.5" y="206" textLength="93" lengthAdjust="spacingAndGlyphs" fill="#0a0a0a" stroke="#0a0a0a" stroke-width="4.8">Vancouver</text><text x="225.5" y="206" textLength="93" lengthAdjust="spacingAndGlyphs" fill="#fff" stroke="#fff" stroke-width="0.45">Vancouver</text>
<text x="344" y="212.5" textLength="70.5" lengthAdjust="spacingAndGlyphs" fill="#0a0a0a" stroke="#0a0a0a" stroke-width="4.8">Calgary</text><text x="344" y="212.5" textLength="70.5" lengthAdjust="spacingAndGlyphs" fill="#fff" stroke="#fff" stroke-width="0.45">Calgary</text>
<text x="221.5" y="256" textLength="62" lengthAdjust="spacingAndGlyphs" fill="#0a0a0a" stroke="#0a0a0a" stroke-width="4.8">Seattle</text><text x="221.5" y="256" textLength="62" lengthAdjust="spacingAndGlyphs" fill="#fff" stroke="#fff" stroke-width="0.45">Seattle</text>
<text x="291.5" y="259" textLength="77" lengthAdjust="spacingAndGlyphs" fill="#0a0a0a" stroke="#0a0a0a" stroke-width="4.8">Spokane</text><text x="291.5" y="259" textLength="77" lengthAdjust="spacingAndGlyphs" fill="#fff" stroke="#fff" stroke-width="0.45">Spokane</text>
<text x="362.5" y="274" textLength="101" lengthAdjust="spacingAndGlyphs" fill="#0a0a0a" stroke="#0a0a0a" stroke-width="4.8">Great Falls</text><text x="362.5" y="274" textLength="101" lengthAdjust="spacingAndGlyphs" fill="#fff" stroke="#fff" stroke-width="0.45">Great Falls</text>
<text x="294" y="346" textLength="45.5" lengthAdjust="spacingAndGlyphs" fill="#0a0a0a" stroke="#0a0a0a" stroke-width="4.8">Boise</text><text x="294" y="346" textLength="45.5" lengthAdjust="spacingAndGlyphs" fill="#fff" stroke="#fff" stroke-width="0.45">Boise</text>
<text x="321.5" y="422.5" textLength="125" lengthAdjust="spacingAndGlyphs" fill="#0a0a0a" stroke="#0a0a0a" stroke-width="4.8">Salt Lake City</text><text x="321.5" y="422.5" textLength="125" lengthAdjust="spacingAndGlyphs" fill="#fff" stroke="#fff" stroke-width="0.45">Salt Lake City</text>
<text x="449" y="426" textLength="93.5" lengthAdjust="spacingAndGlyphs" fill="#0a0a0a" stroke="#0a0a0a" stroke-width="4.8">Cheyenne</text><text x="449" y="426" textLength="93.5" lengthAdjust="spacingAndGlyphs" fill="#fff" stroke="#fff" stroke-width="0.45">Cheyenne</text>
<text x="221.5" y="434" textLength="44.5" lengthAdjust="spacingAndGlyphs" fill="#0a0a0a" stroke="#0a0a0a" stroke-width="4.8">Reno</text><text x="221.5" y="434" textLength="44.5" lengthAdjust="spacingAndGlyphs" fill="#fff" stroke="#fff" stroke-width="0.45">Reno</text>
<text x="140.5" y="450" textLength="130.5" lengthAdjust="spacingAndGlyphs" fill="#0a0a0a" stroke="#0a0a0a" stroke-width="4.8">San Francisco</text><text x="140.5" y="450" textLength="130.5" lengthAdjust="spacingAndGlyphs" fill="#fff" stroke="#fff" stroke-width="0.45">San Francisco</text>
<text x="162.5" y="489" textLength="102" lengthAdjust="spacingAndGlyphs" fill="#0a0a0a" stroke="#0a0a0a" stroke-width="4.8">Santa Cruz</text><text x="162.5" y="489" textLength="102" lengthAdjust="spacingAndGlyphs" fill="#fff" stroke="#fff" stroke-width="0.45">Santa Cruz</text>
<text x="274" y="502.5" textLength="89.5" lengthAdjust="spacingAndGlyphs" fill="#0a0a0a" stroke="#0a0a0a" stroke-width="4.8">Las Vegas</text><text x="274" y="502.5" textLength="89.5" lengthAdjust="spacingAndGlyphs" fill="#fff" stroke="#fff" stroke-width="0.45">Las Vegas</text>
<text x="201.5" y="550" textLength="108" lengthAdjust="spacingAndGlyphs" fill="#0a0a0a" stroke="#0a0a0a" stroke-width="4.8">Los Angeles</text><text x="201.5" y="550" textLength="108" lengthAdjust="spacingAndGlyphs" fill="#fff" stroke="#fff" stroke-width="0.45">Los Angeles</text>
<text x="311.5" y="581" textLength="71" lengthAdjust="spacingAndGlyphs" fill="#0a0a0a" stroke="#0a0a0a" stroke-width="4.8">Phoenix</text><text x="311.5" y="581" textLength="71" lengthAdjust="spacingAndGlyphs" fill="#fff" stroke="#fff" stroke-width="0.45">Phoenix</text>
<text x="408.5" y="561" textLength="113" lengthAdjust="spacingAndGlyphs" fill="#0a0a0a" stroke="#0a0a0a" stroke-width="4.8">Albuquerque</text><text x="408.5" y="561" textLength="113" lengthAdjust="spacingAndGlyphs" fill="#fff" stroke="#fff" stroke-width="0.45">Albuquerque</text>
<text x="447.5" y="600" textLength="68.5" lengthAdjust="spacingAndGlyphs" fill="#0a0a0a" stroke="#0a0a0a" stroke-width="4.8">Roswell</text><text x="447.5" y="600" textLength="68.5" lengthAdjust="spacingAndGlyphs" fill="#fff" stroke="#fff" stroke-width="0.45">Roswell</text>
<text x="401.5" y="639" textLength="66" lengthAdjust="spacingAndGlyphs" fill="#0a0a0a" stroke="#0a0a0a" stroke-width="4.8">El Paso</text><text x="401.5" y="639" textLength="66" lengthAdjust="spacingAndGlyphs" fill="#fff" stroke="#fff" stroke-width="0.45">El Paso</text>
<text x="424" y="682.5" textLength="95.5" lengthAdjust="spacingAndGlyphs" fill="#0a0a0a" stroke="#0a0a0a" stroke-width="4.8">chihuahua</text><text x="424" y="682.5" textLength="95.5" lengthAdjust="spacingAndGlyphs" fill="#fff" stroke="#fff" stroke-width="0.45">chihuahua</text>
<text x="342.5" y="711" textLength="81" lengthAdjust="spacingAndGlyphs" fill="#0a0a0a" stroke="#0a0a0a" stroke-width="4.8">guaymas</text><text x="342.5" y="711" textLength="81" lengthAdjust="spacingAndGlyphs" fill="#fff" stroke="#fff" stroke-width="0.45">guaymas</text>
<text x="518.5" y="754" textLength="95" lengthAdjust="spacingAndGlyphs" fill="#0a0a0a" stroke="#0a0a0a" stroke-width="4.8">monterrey</text><text x="518.5" y="754" textLength="95" lengthAdjust="spacingAndGlyphs" fill="#fff" stroke="#fff" stroke-width="0.45">monterrey</text>
<text x="526.5" y="695" textLength="116" lengthAdjust="spacingAndGlyphs" fill="#0a0a0a" stroke="#0a0a0a" stroke-width="4.8">San Antonio</text><text x="526.5" y="695" textLength="116" lengthAdjust="spacingAndGlyphs" fill="#fff" stroke="#fff" stroke-width="0.45">San Antonio</text>
<text x="599" y="685.5" textLength="70.5" lengthAdjust="spacingAndGlyphs" fill="#0a0a0a" stroke="#0a0a0a" stroke-width="4.8">Houston</text><text x="599" y="685.5" textLength="70.5" lengthAdjust="spacingAndGlyphs" fill="#fff" stroke="#fff" stroke-width="0.45">Houston</text>
<text x="674" y="690" textLength="114.5" lengthAdjust="spacingAndGlyphs" fill="#0a0a0a" stroke="#0a0a0a" stroke-width="4.8">New Orleans</text><text x="674" y="690" textLength="114.5" lengthAdjust="spacingAndGlyphs" fill="#fff" stroke="#fff" stroke-width="0.45">New Orleans</text>
<text x="734" y="654" textLength="58.5" lengthAdjust="spacingAndGlyphs" fill="#0a0a0a" stroke="#0a0a0a" stroke-width="4.8">Mobile</text><text x="734" y="654" textLength="58.5" lengthAdjust="spacingAndGlyphs" fill="#fff" stroke="#fff" stroke-width="0.45">Mobile</text>
<text x="577.5" y="619" textLength="55" lengthAdjust="spacingAndGlyphs" fill="#0a0a0a" stroke="#0a0a0a" stroke-width="4.8">Dallas</text><text x="577.5" y="619" textLength="55" lengthAdjust="spacingAndGlyphs" fill="#fff" stroke="#fff" stroke-width="0.45">Dallas</text>
<text x="692.5" y="565" textLength="83.5" lengthAdjust="spacingAndGlyphs" fill="#0a0a0a" stroke="#0a0a0a" stroke-width="4.8">Memphis</text><text x="692.5" y="565" textLength="83.5" lengthAdjust="spacingAndGlyphs" fill="#fff" stroke="#fff" stroke-width="0.45">Memphis</text>
<text x="739" y="545" textLength="84.5" lengthAdjust="spacingAndGlyphs" fill="#0a0a0a" stroke="#0a0a0a" stroke-width="4.8">Nashville</text><text x="739" y="545" textLength="84.5" lengthAdjust="spacingAndGlyphs" fill="#fff" stroke="#fff" stroke-width="0.45">Nashville</text>
<text x="775.5" y="590" textLength="68" lengthAdjust="spacingAndGlyphs" fill="#0a0a0a" stroke="#0a0a0a" stroke-width="4.8">Atlanta</text><text x="775.5" y="590" textLength="68" lengthAdjust="spacingAndGlyphs" fill="#fff" stroke="#fff" stroke-width="0.45">Atlanta</text>
<text x="857.5" y="616" textLength="101" lengthAdjust="spacingAndGlyphs" fill="#0a0a0a" stroke="#0a0a0a" stroke-width="4.8">Charleston</text><text x="857.5" y="616" textLength="101" lengthAdjust="spacingAndGlyphs" fill="#fff" stroke="#fff" stroke-width="0.45">Charleston</text>
<text x="852.5" y="685" textLength="72" lengthAdjust="spacingAndGlyphs" fill="#0a0a0a" stroke="#0a0a0a" stroke-width="4.8">Orlando</text><text x="852.5" y="685" textLength="72" lengthAdjust="spacingAndGlyphs" fill="#fff" stroke="#fff" stroke-width="0.45">Orlando</text>
<text x="899" y="741" textLength="57" lengthAdjust="spacingAndGlyphs" fill="#0a0a0a" stroke="#0a0a0a" stroke-width="4.8">Miami</text><text x="899" y="741" textLength="57" lengthAdjust="spacingAndGlyphs" fill="#fff" stroke="#fff" stroke-width="0.45">Miami</text>
<text x="670.5" y="499" textLength="100.5" lengthAdjust="spacingAndGlyphs" fill="#0a0a0a" stroke="#0a0a0a" stroke-width="4.8">Saint Louis</text><text x="670.5" y="499" textLength="100.5" lengthAdjust="spacingAndGlyphs" fill="#fff" stroke="#fff" stroke-width="0.45">Saint Louis</text>
<text x="741.5" y="452.5" textLength="109.5" lengthAdjust="spacingAndGlyphs" fill="#0a0a0a" stroke="#0a0a0a" stroke-width="4.8">Indianapolis</text><text x="741.5" y="452.5" textLength="109.5" lengthAdjust="spacingAndGlyphs" fill="#fff" stroke="#fff" stroke-width="0.45">Indianapolis</text>
<text x="879" y="460" textLength="140.5" lengthAdjust="spacingAndGlyphs" fill="#0a0a0a" stroke="#0a0a0a" stroke-width="4.8">Washington DC</text><text x="879" y="460" textLength="140.5" lengthAdjust="spacingAndGlyphs" fill="#fff" stroke="#fff" stroke-width="0.45">Washington DC</text>
<text x="922.5" y="405" textLength="86" lengthAdjust="spacingAndGlyphs" fill="#0a0a0a" stroke="#0a0a0a" stroke-width="4.8">New York</text><text x="922.5" y="405" textLength="86" lengthAdjust="spacingAndGlyphs" fill="#fff" stroke="#fff" stroke-width="0.45">New York</text>
<text x="972.5" y="366" textLength="60" lengthAdjust="spacingAndGlyphs" fill="#0a0a0a" stroke="#0a0a0a" stroke-width="4.8">Boston</text><text x="972.5" y="366" textLength="60" lengthAdjust="spacingAndGlyphs" fill="#fff" stroke="#fff" stroke-width="0.45">Boston</text>
<text x="725.2" y="410.6" textLength="71.1" lengthAdjust="spacingAndGlyphs" fill="#0a0a0a" stroke="#0a0a0a" stroke-width="4.8">Chicago</text><text x="725.2" y="410.6" textLength="71.1" lengthAdjust="spacingAndGlyphs" fill="#fff" stroke="#fff" stroke-width="0.45">Chicago</text>
<text x="791.2" y="391" textLength="61" lengthAdjust="spacingAndGlyphs" fill="#0a0a0a" stroke="#0a0a0a" stroke-width="4.8">Detroit</text><text x="791.2" y="391" textLength="61" lengthAdjust="spacingAndGlyphs" fill="#fff" stroke="#fff" stroke-width="0.45">Detroit</text>
<text x="887.5" y="297.5" textLength="83.5" lengthAdjust="spacingAndGlyphs" fill="#0a0a0a" stroke="#0a0a0a" stroke-width="4.8">Montreal</text><text x="887.5" y="297.5" textLength="83.5" lengthAdjust="spacingAndGlyphs" fill="#fff" stroke="#fff" stroke-width="0.45">Montreal</text>
<text x="670.5" y="277.6" textLength="116.4" lengthAdjust="spacingAndGlyphs" fill="#0a0a0a" stroke="#0a0a0a" stroke-width="4.8">Thunder Bay</text><text x="670.5" y="277.6" textLength="116.4" lengthAdjust="spacingAndGlyphs" fill="#fff" stroke="#fff" stroke-width="0.45">Thunder Bay</text>
<text x="577.5" y="254" textLength="86" lengthAdjust="spacingAndGlyphs" fill="#0a0a0a" stroke="#0a0a0a" stroke-width="4.8">Winnipeg</text><text x="577.5" y="254" textLength="86" lengthAdjust="spacingAndGlyphs" fill="#fff" stroke="#fff" stroke-width="0.45">Winnipeg</text>
<text x="536.5" y="312.5" textLength="86" lengthAdjust="spacingAndGlyphs" fill="#0a0a0a" stroke="#0a0a0a" stroke-width="4.8">Bismarck</text><text x="536.5" y="312.5" textLength="86" lengthAdjust="spacingAndGlyphs" fill="#fff" stroke="#fff" stroke-width="0.45">Bismarck</text>
<text x="617.5" y="357.5" textLength="112" lengthAdjust="spacingAndGlyphs" fill="#0a0a0a" stroke="#0a0a0a" stroke-width="4.8">Minneapolis</text><text x="617.5" y="357.5" textLength="112" lengthAdjust="spacingAndGlyphs" fill="#fff" stroke="#fff" stroke-width="0.45">Minneapolis</text>
<text x="614" y="426" textLength="102" lengthAdjust="spacingAndGlyphs" fill="#0a0a0a" stroke="#0a0a0a" stroke-width="4.8">Des Moines</text><text x="614" y="426" textLength="102" lengthAdjust="spacingAndGlyphs" fill="#fff" stroke="#fff" stroke-width="0.45">Des Moines</text>
</g>
<polygon points="334,701 380,680 370,697 382,716" fill="#fff" stroke="#111" stroke-width="1.6" stroke-linejoin="miter"/>
<polygon points="1134.8,665.8 1146,685.3 1140.6,695.9" fill="#e9a02a" stroke="#3a2a10" stroke-width="1"/>
<polygon points="1134.8,665.8 1159.4,681 1146,685.3" fill="#f6dca0" stroke="#3a2a10" stroke-width="1"/>
</svg>
<div id="legend"></div>
<div class="cb" style="left:56px;top:801px"></div>
<div style="left:98px;top:803px;width:23px;height:23px;border-radius:50%;background:#fbc75e;border:2px solid #111"></div>
<div style="left:64px;top:809px;width:12px;height:12px;border-radius:50%;background:#d0d0d0"></div>
<div class="lb" style="left:130px;top:806px">Cities</div>
<div class="cb" style="left:56px;top:836px"></div>
<svg style="position:absolute;left:96.5px;top:833px" width="27" height="30" viewBox="0 0 27 30"><path d="M2.5 3.5 Q8 5.5 13.5 2.5 Q19 5.5 24.5 3.5 Q27 12 24 19 Q21 25.5 13.5 28.5 Q6 25.5 3 19 Q0 12 2.5 3.5Z" fill="#1464c8" stroke="#e8e8e8" stroke-width="1.2"/><path d="M2.5 3.5 Q8 5.5 13.5 2.5 Q19 5.5 24.5 3.5 Q25.6 6.5 25.6 9.5 L1.4 9.5 Q1.4 6.5 2.5 3.5Z" fill="#d8283c"/><text x="13.5" y="22" text-anchor="middle" font-family="'Liberation Sans',sans-serif" font-weight="bold" font-size="12.5" fill="#fff">10</text></svg>
<div class="lb" style="left:130px;top:840px">Roads</div>
<div class="cb" style="left:56px;top:870px"></div>
<div class="ic" style="left:96px;top:870.5px;background:#e23c22;color:#fff">F</div>
<div class="lb" style="left:130px;top:875px">Gas Stations</div>
<div class="cb" style="left:306px;top:801px"></div>
<div class="ic" style="left:345px;top:801.5px;background:#6fcfe6;color:#10202a">S</div>
<div class="lb" style="left:380px;top:806px">Services</div>
<div class="cb" style="left:306px;top:836px"></div>
<div class="ic" style="left:345px;top:836.5px;background:#cc44c8;color:#fff">W</div>
<div class="lb" style="left:380px;top:840px">Scales</div>
<div class="cb" style="left:306px;top:870px"></div>
<div class="ic" style="left:345px;top:870.5px;background:#fbc04a;color:#b01808">D</div>
<div class="lb" style="left:380px;top:875px">Used Truck Dealers</div>
<div class="cb" style="left:556px;top:801px"></div>
<div class="ic" style="left:595px;top:801.5px;background:#62a51a;color:#eef6d8">H</div>
<div class="lb" style="left:630px;top:806px">Hotels</div>
<div class="cb" style="left:556px;top:836px"></div>
<div class="ic" style="left:595px;top:836.5px;background:#0a5ccc;color:#fff">P</div>
<div class="lb" style="left:630px;top:840px">Parking Lots</div>
<div class="cb" style="left:556px;top:870px"></div>
<div class="ic" style="left:595px;top:870.5px;background:#0a0a0a;color:#e8c878">G</div>
<div class="lb" style="left:630px;top:875px">Garages</div>
<div class="cb" style="left:806px;top:836px"></div>
<svg style="position:absolute;left:841px;top:837px" width="32" height="27" viewBox="0 0 32 27"><rect width="32" height="27" fill="#fcc41c"/><rect y="9" width="32" height="8.5" fill="#fff"/><text x="1" y="17" font-family="'Liberation Sans',sans-serif" font-weight="bold" font-size="8.6" textLength="29" lengthAdjust="spacingAndGlyphs" fill="#000">NEXTAR</text><path d="M28 13 l1.2 3 3 .3 -2.3 2 .8 3.2 -2.7-1.8 -2.7 1.8 .8-3.2 -2.3-2 3-.3z" fill="#e0182c"/></svg>
<div class="lb" style="left:880px;top:840px">Companies</div>
<div class="cb" style="left:806px;top:870px"></div>
<div style="left:844px;top:872px;width:24px;height:25px;border-radius:50%;border:4.5px solid #e00410"></div>
<div class="lb" style="left:880px;top:875px">Cargo Destination</div>
<div class="lb" style="left:1123px;top:879px;letter-spacing:.5px">ZOOM</div>
<div style="left:1183px;top:879px;width:16px;height:16px;border-radius:50%;background:#2e6a12"></div><div style="left:1186.5px;top:886px;width:9px;height:2.6px;background:#e8f0e0"></div>
<div style="left:1206px;top:879px;width:16px;height:16px;border-radius:50%;background:#2e6a12"></div><div style="left:1209.5px;top:886px;width:9px;height:2.6px;background:#e8f0e0"></div><div style="left:1212.7px;top:882.7px;width:2.6px;height:9px;background:#e8f0e0"></div>
<div class="btn" style="left:713px">ADVANCE TIME</div>
<div class="btn" style="left:903px">BACK</div>
<div id="osd">Can not connect to SpeedFan!
FVM:256Mb FTM:758Mb SMU:230Mb
GPUt:48C ENVt:38C Fan:41%</div>
<div id="fps">195</div>
</body></html>
